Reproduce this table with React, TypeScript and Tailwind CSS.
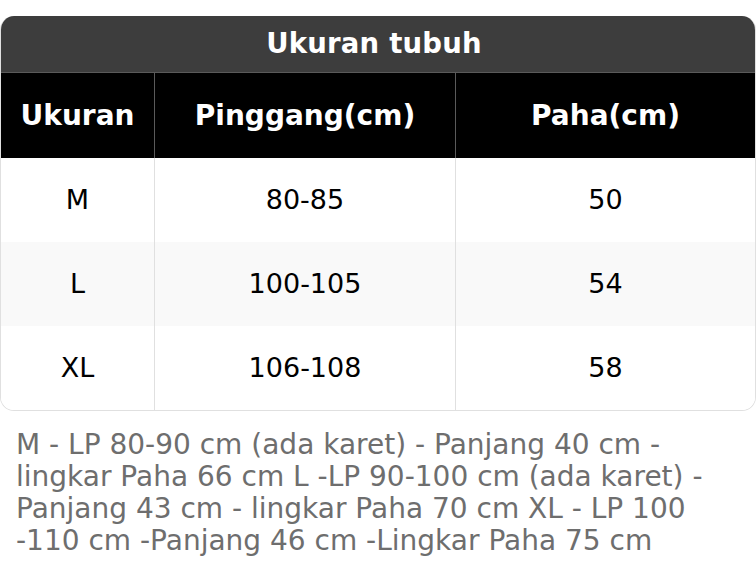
import React from "react";

const rows = [
  { size: "M", waist: "80-85", thigh: "50", bg: "bg-white" },
  { size: "L", waist: "100-105", thigh: "54", bg: "bg-[#f9f9f9]" },
  { size: "XL", waist: "106-108", thigh: "58", bg: "bg-white" },
];

export default function App() {
  return (
    <div className="w-[756px] h-[572px] bg-white pt-4 font-['DejaVu_Sans',sans-serif]">
      <div className="rounded-[14px] overflow-hidden border-x border-b border-[#e0e0e0]">
        <div className="h-[57px] bg-[#3d3d3d] flex items-center justify-center pr-[8px] text-white font-bold text-[27.5px] tracking-[0.2px] border-b border-[#5a5a5a]">
          Ukuran tubuh
        </div>
        <div className="grid grid-cols-[153px_301px_1fr] h-[85px] bg-black text-white font-bold text-[28px]">
          <div className="flex items-center justify-center">Ukuran</div>
          <div className="flex items-center justify-center border-l border-[#5a5a5a]">Pinggang(cm)</div>
          <div className="flex items-center justify-center border-l border-[#5a5a5a]">Paha(cm)</div>
        </div>
        {rows.map((r) => (
          <div key={r.size} className={`grid grid-cols-[153px_301px_1fr] h-[84px] text-black text-[27px] ${r.bg}`}>
            <div className="flex items-center justify-center">{r.size}</div>
            <div className="flex items-center justify-center border-l border-[#e0e0e0]">{r.waist}</div>
            <div className="flex items-center justify-center border-l border-[#e0e0e0]">{r.thigh}</div>
          </div>
        ))}
      </div>
      <p className="px-4 mt-[18px] text-[28px] leading-[32px] text-[#6e6e6e]">
        M - LP 80-90 cm (ada karet) - Panjang 40 cm - lingkar Paha 66 cm L -LP 90-100 cm (ada karet) - Panjang 43 cm - lingkar Paha 70 cm XL - LP 100 -110 cm -Panjang 46 cm -Lingkar Paha 75 cm
      </p>
    </div>
  );
}
